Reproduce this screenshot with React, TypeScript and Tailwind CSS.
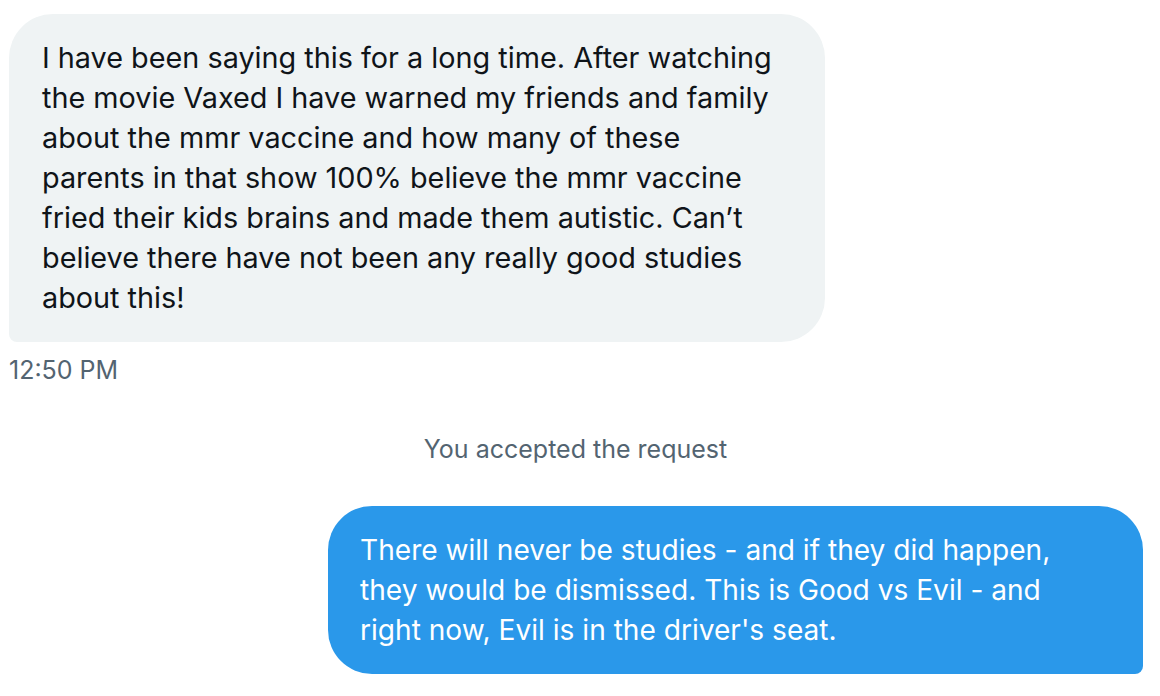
import React from "react";

const gray = [
  "I have been saying this for a long time. After watching",
  "the movie Vaxed I have warned my friends and family",
  "about the mmr vaccine and how many of these",
  "parents in that show 100% believe the mmr vaccine",
  "fried their kids brains and made them autistic. Can\u2019t",
  "believe there have not been any really good studies",
  "about this!",
];

const blue = [
  "There will never be studies - and if they did happen,",
  "they would be dismissed. This is Good vs Evil - and",
  "right now, Evil is in the driver's seat.",
];

export default function App() {
  return (
    <div
      className="w-[1160px] h-[696px] bg-white overflow-hidden flex flex-col"
      style={{ fontFamily: "Inter, 'Noto Sans', sans-serif" }}
    >
      <div className="pl-[9px] pt-[14px]">
        <div className="w-[816px] bg-[#eff3f4] text-[#0f1419] rounded-[44px] rounded-bl-[8px] px-[33px] py-[24px] text-[28.8px] leading-[40px]">
          {gray.map((l, i) => (
            <div key={i} className="whitespace-nowrap">{l}</div>
          ))}
        </div>
        <div className="mt-[14px] text-[25px] leading-[28px] text-[#536471]">12:50 PM</div>
      </div>
      <div className="mt-[51px] pr-[9px] text-center text-[25px] leading-[28px] text-[#536471]">
        You accepted the request
      </div>
      <div className="flex justify-end pr-[17px] mt-[43px]">
        <div className="w-[815px] bg-[#2a98ea] text-white rounded-[44px] rounded-br-[8px] px-[32px] py-[24px] text-[28.1px] leading-[40px]">
          {blue.map((l, i) => (
            <div key={i} className="whitespace-nowrap">{l}</div>
          ))}
        </div>
      </div>
    </div>
  );
}
